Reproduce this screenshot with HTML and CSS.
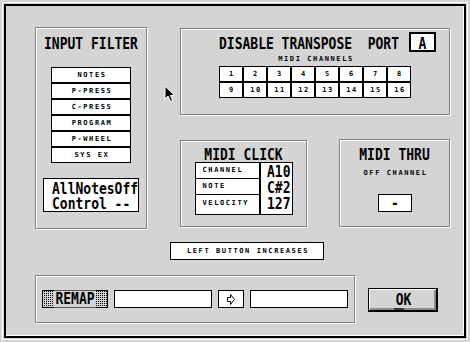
FILE: index.html
```html
<!DOCTYPE html>
<html lang="en">
<head>
    <meta charset="UTF-8">
    <title>MIDI Setup</title>
    <link rel="stylesheet" href="styles.css">
</head>
<body>

    <div class="screen">
        <div class="top">
            <section class="panel filter">
                <div class="panel-title"><span class="big">INPUT FILTER</span></div>
                <ul class="filter-list">
                    <li>NOTES</li>
                    <li>P-PRESS</li>
                    <li>C-PRESS</li>
                    <li>PROGRAM</li>
                    <li>P-WHEEL</li>
                    <li>SYS EX</li>
                </ul>
                <div class="status">
                    <div class="big">AllNotesOff</div>
                    <div class="big">Control --</div>
                </div>
            </section>

            <div class="right-col">
                <section class="panel transpose">
                    <div class="transpose-head">
                        <span class="big">DISABLE TRANSPOSE  PORT</span>
                        <div class="port"><span class="big">A</span></div>
                    </div>
                    <div class="caption">MIDI CHANNELS</div>
                    <div class="channels" id="channels"></div>
                </section>

                <div class="lower">
                    <section class="panel click">
                        <div class="panel-title"><span class="big">MIDI CLICK</span></div>
                        <div class="click-table">
                            <div class="click-labels">
                                <div>CHANNEL</div>
                                <div>NOTE</div>
                                <div>VELOCITY</div>
                            </div>
                            <div class="click-values">
                                <div class="big">A10</div>
                                <div class="big">C#2</div>
                                <div class="big">127</div>
                            </div>
                        </div>
                    </section>

                    <section class="panel thru">
                        <div class="panel-title"><span class="big">MIDI THRU</span></div>
                        <div class="caption thru-caption">OFF CHANNEL</div>
                        <div class="thru-box"><span class="big">-</span></div>
                    </section>
                </div>
            </div>
        </div>

        <div class="hint">LEFT BUTTON INCREASES</div>

        <div class="bottom">
            <section class="panel remap">
                <button class="remap-btn"><span class="big">REMAP</span></button>
                <div class="field"></div>
                <button class="arrow-btn">
                    <svg width="8" height="11" viewBox="0 0 8 11">
                        <polygon points="0.5,3.5 3.5,3.5 3.5,0.5 7.5,5.5 3.5,10.5 3.5,7.5 0.5,7.5" fill="#fff" stroke="#000" stroke-width="1"/>
                    </svg>
                </button>
                <div class="field"></div>
            </section>
            <button class="ok"><span class="big"><span class="ul">O</span>K</span></button>
        </div>

        <svg class="cursor" width="12" height="18" viewBox="0 0 12 18">
            <polygon points="1,1 1,14 4,11 6.5,16.5 8.5,15.5 6.5,10.5 10.5,10.5" fill="#000" stroke="#fff" stroke-width="1"/>
        </svg>
    </div>

    <script>
        const channels = document.getElementById("channels");
        for (let i = 1; i <= 16; i++) {
            let cell = document.createElement("span");
            cell.textContent = i;
            channels.appendChild(cell);
        }
    </script>

</body>
</html>
```

FILE: styles.css
```css
html {
    overflow: hidden;
}
body {
    margin: 0;
    padding: 4px;
    background: #d4d4d4;
    color: #000;
    font-family: "DejaVu Sans Mono", monospace;
}
.screen {
    position: relative;
    height: 334px;
    box-sizing: border-box;
    border: 2px solid #000;
    outline: 1px solid #fff;
    outline-offset: 1px;
    box-shadow: inset -1px -1px 0 #fff;
}
.big {
    display: inline-block;
    font-family: "DejaVu Sans Mono", monospace;
    font-weight: bold;
    font-size: 13px;
    line-height: 12px;
    white-space: pre;
    transform: scaleY(1.2);
}
.caption,
.filter-list li,
.channels span,
.click-labels div,
.hint {
    font-family: "DejaVu Sans Mono", monospace;
    font-weight: bold;
    font-size: 7px;
    letter-spacing: 1.6px;
}
.panel {
    border: 1px solid #848484;
    box-shadow: inset 1px 1px 0 #fff, 1px 1px 0 #fff;
    box-sizing: border-box;
}
.panel-title {
    display: flex;
    justify-content: center;
}

.top {
    display: flex;
    padding: 21px 0 0 29px;
}

/* input filter */
.filter {
    width: 112px;
    height: 202px;
}
.filter .panel-title {
    padding-top: 10px;
}
.filter-list {
    list-style: none;
    margin: 17px auto 0;
    padding: 0;
    width: 80px;
}
.filter-list li {
    height: 16px;
    box-sizing: border-box;
    border: 1px solid #000;
    background: #fff;
    line-height: 14px;
    text-align: center;
    padding-left: 2px;
}
.status {
    width: 96px;
    height: 34px;
    margin: 15px auto 0;
    box-sizing: border-box;
    border: 1px solid #000;
    background: #fff;
    padding: 4px 0 0 8px;
    overflow: hidden;
}
.status .big {
    display: block;
    margin-bottom: 3px;
}

/* right column */
.right-col {
    margin: 1px 0 0 33px;
}
.transpose {
    width: 270px;
    height: 87px;
}
.transpose-head {
    display: flex;
    align-items: flex-start;
    margin-top: 3px;
    padding-left: 38px;
}
.transpose-head > .big {
    margin-top: 6px;
}
.port {
    width: 27px;
    height: 20px;
    box-sizing: border-box;
    margin-left: 10px;
    border: 2px solid #000;
    background: #fff;
    display: flex;
    justify-content: center;
    padding-top: 4px;
}
.caption {
    margin-top: 3px;
    line-height: 8px;
    text-align: center;
    padding-left: 2px;
}
.channels {
    display: grid;
    grid-template-columns: repeat(8, 22px);
    grid-auto-rows: 14px;
    gap: 2px;
    width: max-content;
    margin: 3px auto 0;
    border: 1px solid #000;
    background: #000;
}
.channels span {
    background: #fff;
    line-height: 14px;
    text-align: center;
    padding-left: 2px;
}

.lower {
    display: flex;
    margin-top: 25px;
}
.click {
    width: 127px;
    height: 87px;
}
.click .panel-title {
    padding-top: 8px;
}
.click-table {
    display: flex;
    width: 98px;
    box-sizing: border-box;
    margin: 1px auto 0;
    border: 1px solid #000;
    background: #fff;
}
.click-labels {
    width: 65px;
    box-sizing: border-box;
    border-right: 2px solid #000;
}
.click-labels div {
    height: 15px;
    line-height: 15px;
    padding-left: 7px;
}
.click-labels div + div {
    border-top: 1px solid #000;
}
.click-labels div:last-child {
    height: 16px;
    line-height: 16px;
}
.click-values {
    flex: 1;
    padding: 3px 1px 0 0;
    text-align: right;
}
.click-values .big {
    display: block;
    margin-bottom: 4px;
}

.thru {
    width: 111px;
    height: 88px;
    margin: -1px 0 0 32px;
}
.thru .panel-title {
    padding-top: 9px;
}
.thru-caption {
    margin-top: 8px;
}
.thru-box {
    width: 34px;
    height: 18px;
    box-sizing: border-box;
    margin: 17px 0 0 38px;
    border: 1px solid #000;
    background: #fff;
    display: flex;
    justify-content: center;
    align-items: center;
}

/* hint */
.hint {
    width: 154px;
    height: 18px;
    box-sizing: border-box;
    margin: 13px 0 0 164px;
    border: 1px solid #000;
    background: #fff;
    line-height: 16px;
    text-align: center;
    padding-left: 2px;
}

/* bottom row */
.bottom {
    display: flex;
    align-items: flex-start;
    margin-top: 15px;
    padding-left: 29px;
}
.remap {
    width: 320px;
    height: 48px;
    display: flex;
    align-items: center;
    gap: 6px;
    padding-left: 6px;
}
button {
    font: inherit;
    color: #000;
    padding: 0;
    margin: 0;
    cursor: pointer;
}
.remap-btn {
    width: 66px;
    height: 18px;
    border: 1px solid #000;
    background: conic-gradient(#000 0 25%, #d4d4d4 0) 0 0 / 2px 2px;
    display: flex;
    justify-content: center;
    align-items: center;
}
.remap-btn .big {
    background: #d4d4d4;
    padding: 1px 1px;
}
.field {
    width: 98px;
    height: 18px;
    box-sizing: border-box;
    border: 1px solid #000;
    background: #fff;
}
.arrow-btn {
    width: 26px;
    height: 18px;
    border: 1px solid #000;
    background: #fff;
    display: flex;
    justify-content: center;
    align-items: center;
}
.ok {
    width: 70px;
    height: 24px;
    margin: 13px 0 0 13px;
    border: 1px solid #000;
    border-width: 1px 2px 2px 1px;
    background: #d4d4d4;
    box-shadow: inset 1px 1px 0 #fff, inset -2px -2px 0 #8c8c8c;
    display: flex;
    justify-content: center;
    align-items: center;
}
.ok .ul {
    border-bottom: 1px solid #000;
    padding-left: 2px;
}

.cursor {
    position: absolute;
    left: 158px;
    top: 79px;
}
```
